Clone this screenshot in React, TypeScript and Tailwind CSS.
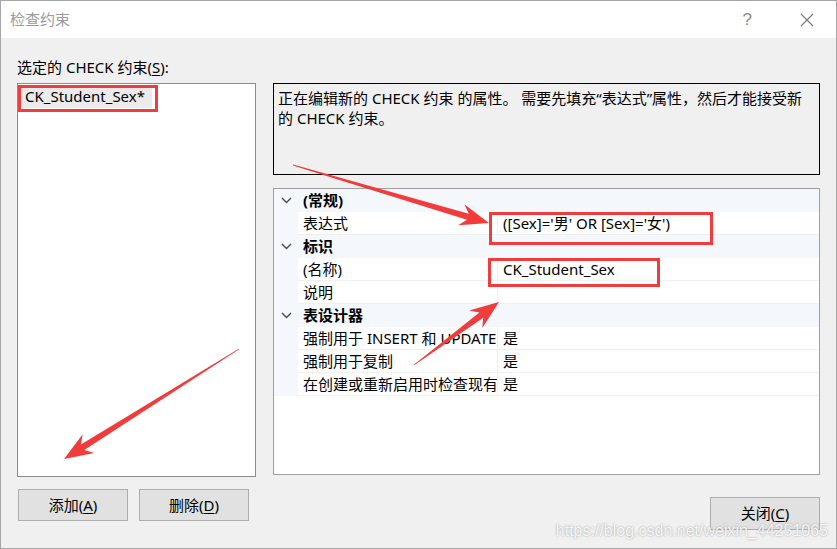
import React from "react";

type PropRow =
  | { kind: "cat"; label: string }
  | { kind: "prop"; name: string; value: string };

const rows: PropRow[] = [
  { kind: "cat", label: "(常规)" },
  { kind: "prop", name: "表达式", value: "([Sex]='男' OR [Sex]='女')" },
  { kind: "cat", label: "标识" },
  { kind: "prop", name: "(名称)", value: "CK_Student_Sex" },
  { kind: "prop", name: "说明", value: "" },
  { kind: "cat", label: "表设计器" },
  { kind: "prop", name: "强制用于 INSERT 和 UPDATE", value: "是" },
  { kind: "prop", name: "强制用于复制", value: "是" },
  { kind: "prop", name: "在创建或重新启用时检查现有数据", value: "是" },
];

function arrowPoints(x1: number, y1: number, x2: number, y2: number) {
  const L = 26;
  const W = 11;
  const w = 3.2;
  const dx = x2 - x1;
  const dy = y2 - y1;
  const len = Math.hypot(dx, dy);
  const ux = dx / len;
  const uy = dy / len;
  const nx = -uy;
  const ny = ux;
  const bx = x2 - ux * L;
  const by = y2 - uy * L;
  const pts = [
    [x1 + nx * 0.4, y1 + ny * 0.4],
    [bx + ux * 4 + nx * w, by + uy * 4 + ny * w],
    [bx - ux * 3 + nx * W, by - uy * 3 + ny * W],
    [x2, y2],
    [bx - ux * 3 - nx * W, by - uy * 3 - ny * W],
    [bx + ux * 4 - nx * w, by + uy * 4 - ny * w],
    [x1 - nx * 0.4, y1 - ny * 0.4],
  ];
  return pts.map((p) => `${p[0].toFixed(1)},${p[1].toFixed(1)}`).join(" ");
}

function Chevron() {
  return (
    <svg width="11" height="7" viewBox="0 0 11 7" className="block">
      <path d="M1 1 L5.5 5.5 L10 1" fill="none" stroke="#4a4a4a" strokeWidth="1.4" />
    </svg>
  );
}

function WinButton({ children, className = "" }: { children: React.ReactNode; className?: string }) {
  return (
    <div
      className={`w-[110px] flex items-center justify-center bg-[#e1e1e1] border border-[#adadad] text-[15px] text-black ${className}`}
    >
      {children}
    </div>
  );
}

export default function App() {
  return (
    <div className="relative w-[837px] h-[549px] flex flex-col bg-[#f0f0f0] border border-[#a6a6a6] font-['Noto_Sans','Noto_Sans_CJK_SC',sans-serif] text-black overflow-hidden">
      {/* Title bar */}
      <div className="h-[37px] bg-white flex items-center pl-[9px] text-[15px] text-[#9a9a9a] shrink-0">
        <span>检查约束</span>
        <span className="ml-auto mr-[48px] text-[17px] text-[#8a8a8a] font-['Liberation_Sans',sans-serif]">?</span>
        <svg width="14" height="14" viewBox="0 0 14 14" className="mr-[22px]">
          <path d="M1 1 L13 13 M13 1 L1 13" stroke="#777" strokeWidth="1.1" />
        </svg>
      </div>

      {/* Body */}
      <div className="flex flex-1 px-[16px] gap-[17px]">
        {/* Left column */}
        <div className="w-[239px] flex flex-col pt-[19px]">
          <div className="h-[20px] leading-[20px] text-[15px]">
            选定的 CHECK 约束(<span className="underline underline-offset-2">S</span>):
          </div>
          <div className="relative mt-[6px] h-[394px] border border-[#8c8c8c] bg-white pt-px">
            <div className="w-[134px] h-[23px] leading-[23px] pl-[7px] bg-[#ebebeb] text-[15px]">
              CK_Student_Sex*
            </div>
            <div className="absolute left-0 top-px w-[140px] h-[27px] border-[3px] border-[#f03c3c]" />
          </div>
          <div className="mt-[12px] flex gap-[11px] pl-px">
            <WinButton className="h-[32px]">
              添加(<span className="underline underline-offset-2">A</span>)
            </WinButton>
            <WinButton className="h-[32px]">
              删除(<span className="underline underline-offset-2">D</span>)
            </WinButton>
          </div>
        </div>

        {/* Right column */}
        <div className="w-[547px] flex flex-col pt-[45px]">
          <div className="h-[92px] border border-black bg-[#f0f0f0] pl-[4px] pt-[4px] text-[15px] leading-[20px] whitespace-nowrap">
            <div>正在编辑新的 CHECK 约束 的属性。 需要先填充“表达式”属性，然后才能接受新</div>
            <div>的 CHECK 约束。</div>
          </div>

          <div className="relative mt-[13px] h-[287px] border border-[#a0a0a0] bg-white">
            {rows.map((r, i) =>
              r.kind === "cat" ? (
                <div key={i} className="flex h-[23px] bg-[#f4f7fc] items-center">
                  <div className="w-[24px] flex justify-center">
                    <Chevron />
                  </div>
                  <div className="pl-[5px] text-[15px] font-bold leading-[23px]">{r.label}</div>
                </div>
              ) : (
                <div key={i} className="flex h-[23px]">
                  <div className="w-[24px] bg-[#f4f7fc]" />
                  <div className="w-[200px] pl-[5px] text-[15px] leading-[22px] whitespace-nowrap overflow-hidden border-b border-r border-[#f0f0f0]">
                    {r.name}
                  </div>
                  <div className="flex-1 pl-[5px] text-[15px] leading-[22px] whitespace-nowrap overflow-hidden border-b border-[#f0f0f0]">
                    {r.value}
                  </div>
                </div>
              )
            )}
            <div className="absolute left-[215px] top-[23px] w-[224px] h-[33px] border-[3px] border-[#f03c3c]" />
            <div className="absolute left-[214px] top-[69px] w-[172px] h-[29px] border-[3px] border-[#f03c3c]" />
          </div>

          <div className="mt-[22px] flex justify-end">
            <WinButton className="h-[33px]">
              关闭(<span className="underline underline-offset-2">C</span>)
            </WinButton>
          </div>
        </div>
      </div>

      {/* Annotation arrows */}
      <svg className="absolute left-0 top-0 pointer-events-none" width="837" height="549">
        <polygon points={arrowPoints(292, 164, 488, 222)} fill="#f23b3b" />
        <polygon points={arrowPoints(413, 364, 498, 301)} fill="#f23b3b" />
        <polygon points={arrowPoints(238, 348, 63, 458)} fill="#f23b3b" />
      </svg>

      {/* Watermark */}
      <div className="absolute right-[8px] bottom-[7px] text-[16px] leading-[20px] font-['Liberation_Sans',sans-serif] text-[#ffffffdd] [text-shadow:0_0_2px_#9a9a9a] pointer-events-none">
        https://blog.csdn.net/weixin_44251065
      </div>
    </div>
  );
}
